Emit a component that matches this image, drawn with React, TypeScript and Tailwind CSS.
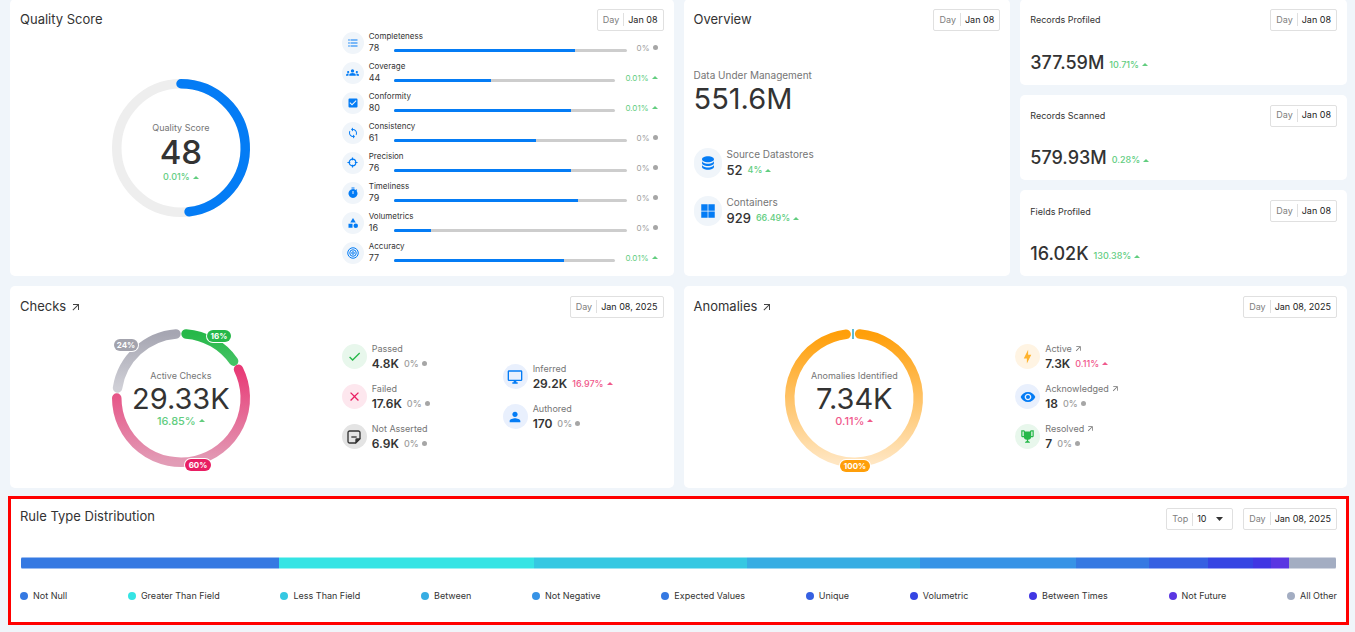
import type { ReactNode } from "react";
import {
  MdArrowOutward,
  MdCategory,
  MdCheck,
  MdCheckBox,
  MdClose,
  MdFormatListBulleted,
  MdGroups,
  MdLoop,
  MdPerson,
  MdVisibility,
} from "react-icons/md";

type Trend = "up" | "bad" | "flat";

function Glyph({ d, size }: { d: string; size: number }) {
  return (
    <svg width={size} height={size} viewBox="0 0 24 24" fill="currentColor" aria-hidden="true">
      <path d={d} />
    </svg>
  );
}

const TIMER =
  "M15 1H9v2h6V1zm4.03 6.39 1.42-1.42c-.43-.51-.9-.99-1.41-1.41l-1.42 1.42A8.96 8.96 0 0 0 12 4a9 9 0 1 0 7.03 3.39zM13 14h-2V8h2v6z";
const DATABASE =
  "M12,3C7.58,3 4,4.79 4,7C4,9.21 7.58,11 12,11C16.42,11 20,9.21 20,7C20,4.79 16.42,3 12,3M4,9V12C4,14.21 7.58,16 12,16C16.42,16 20,14.21 20,12V9C20,11.21 16.42,13 12,13C7.58,13 4,11.21 4,9M4,14V17C4,19.21 7.58,21 12,21C16.42,21 20,19.21 20,17V14C20,16.21 16.42,18 12,18C7.58,18 4,16.21 4,14Z";
const GRID = "M3 3h8.5v8.5H3zM12.5 3H21v8.5h-8.5zM3 12.5h8.5V21H3zM12.5 12.5H21V21h-8.5z";
const MONITOR =
  "M21,16H3V4H21M21,2H3C1.89,2 1,2.89 1,4V16A2,2 0 0,0 3,18H10V20H8V22H16V20H14V18H21A2,2 0 0,0 23,16V4C23,2.89 22.1,2 21,2Z";
const BOLT = "M11 15H6L13 1V9H18L11 23V15Z";
const TROPHY =
  "M18 2C17.1 2 16 3 16 4H8C8 3 6.9 2 6 2H2V11C2 12 3 13 4 13H6.2C6.6 15 7.9 16.7 11 17V19.08C8 19.54 8 22 8 22H16C16 22 16 19.54 13 19.08V17C16.1 16.7 17.4 15 17.8 13H20C21 13 22 12 22 11V2H18M6 11H4V4H6V11M20 11H18V4H20V11Z";

function TargetIcon() {
  return (
    <svg width="12" height="12" viewBox="0 0 24 24" fill="none" stroke="currentColor" strokeWidth="2" aria-hidden="true">
      <circle cx="12" cy="12" r="10.5" />
      <circle cx="12" cy="12" r="6.5" />
      <circle cx="12" cy="12" r="2.5" />
    </svg>
  );
}

function CrosshairIcon() {
  return (
    <svg width="11" height="11" viewBox="0 0 24 24" fill="none" stroke="currentColor" strokeWidth="2.6" aria-hidden="true">
      <circle cx="12" cy="12" r="7.2" />
      <path d="M12 1v6M12 17v6M1 12h6M17 12h6" />
    </svg>
  );
}

function NoteIcon() {
  return (
    <svg width="16" height="16" viewBox="0 0 24 24" aria-hidden="true">
      <path
        d="M14.5 21H5.5A2.5 2.5 0 0 1 3 18.5V5.5A2.5 2.5 0 0 1 5.5 3h13A2.5 2.5 0 0 1 21 5.5v9z"
        fill="none"
        stroke="currentColor"
        strokeWidth="2"
      />
      <path d="M14 21.5V16a2 2 0 0 1 2-2h5.5v1L15 21.5z" fill="currentColor" />
      <path d="M8 11h8v2H8z" fill="currentColor" />
    </svg>
  );
}

function Marker({ trend }: { trend: Trend }) {
  return trend === "flat" ? (
    <span className="size-[5px] rounded-full bg-[#a6a6a6]" />
  ) : (
    <svg width="6" height="3" viewBox="0 0 6 3" fill="currentColor" aria-hidden="true">
      <path d="M0 3L3 0L6 3z" />
    </svg>
  );
}

const deltaSizes = {
  sm: "text-[8px] font-normal",
  md: "text-[9px] font-medium",
  lg: "text-[11px] font-medium",
};

function Delta({ value, trend = "up", size = "md" }: { value: string; trend?: Trend; size?: keyof typeof deltaSizes }) {
  const color = trend === "up" ? "text-[#62cd7f]" : trend === "bad" ? "text-[#f0598c]" : "text-[#9e9e9e]";
  return (
    <span className={`flex items-center gap-[3px] leading-[14px] ${color} ${deltaSizes[size]}`}>
      {value}
      <Marker trend={trend} />
    </span>
  );
}

function DateChip({ date }: { date: string }) {
  return (
    <button
      type="button"
      className="flex h-[22px] items-center rounded-[2px] border border-[#e0e0e0] px-[5px] pb-px text-[9px] whitespace-nowrap"
    >
      <span className="text-[#808080]">Day</span>
      <span className="mx-1 h-[13px] w-px bg-[#e0e0e0]" />
      <span className="text-[#222]">{date}</span>
    </button>
  );
}

function Card({ title, date, link = false, children }: { title: string; date: string; link?: boolean; children: ReactNode }) {
  return (
    <>
      <header className="flex h-[22px] items-center justify-between">
        <h2 className="flex items-center gap-1 text-[13px]">
          {title}
          {link && (
            <a href="#details" aria-label={`Open ${title}`} className="text-[#444]">
              <MdArrowOutward size={12} />
            </a>
          )}
        </h2>
        <DateChip date={date} />
      </header>
      {children}
    </>
  );
}

const metrics: { name: string; value: number; delta?: string; icon: ReactNode }[] = [
  { name: "Completeness", value: 78, icon: <MdFormatListBulleted size={12} /> },
  { name: "Coverage", value: 44, delta: "0.01%", icon: <MdGroups size={13} /> },
  { name: "Conformity", value: 80, delta: "0.01%", icon: <MdCheckBox size={12} /> },
  { name: "Consistency", value: 61, icon: <MdLoop size={12} /> },
  { name: "Precision", value: 76, icon: <CrosshairIcon /> },
  { name: "Timeliness", value: 79, icon: <Glyph d={TIMER} size={12} /> },
  { name: "Volumetrics", value: 16, icon: <MdCategory size={12} /> },
  { name: "Accuracy", value: 77, delta: "0.01%", icon: <TargetIcon /> },
];

function arc(from: number, to: number) {
  const point = (deg: number) => {
    const a = (deg * Math.PI) / 180;
    return `${70 + 64.25 * Math.sin(a)} ${70 - 64.25 * Math.cos(a)}`;
  };
  return `M${point(from)} A64.25 64.25 0 ${to - from > 180 ? 1 : 0} 1 ${point(to)}`;
}

function Donut({ label, value, delta, trend, large, children }: {
  label: string;
  value: string;
  delta: string;
  trend: Trend;
  large?: boolean;
  children: ReactNode;
}) {
  return (
    <div className="grid place-items-center self-center justify-self-center">
      <svg
        width="140"
        height="140"
        viewBox="0 0 140 140"
        fill="none"
        strokeWidth="9.5"
        strokeLinecap="round"
        className="col-start-1 row-start-1 overflow-visible"
        aria-hidden="true"
      >
        {children}
      </svg>
      <div className={`col-start-1 row-start-1 flex flex-col items-center ${large ? "" : "pt-[10px]"}`}>
        <span className="text-[9px] leading-[14px] text-[#757575]">{label}</span>
        <span className={large ? "text-[29px] leading-[31px]" : "text-[33px] leading-[35px] font-medium"}>
          {value}
        </span>
        <Delta value={delta} trend={trend} size={large ? "lg" : "md"} />
      </div>
    </div>
  );
}

function Badge({ x, y, w, fill, text }: { x: number; y: number; w: number; fill: string; text: string }) {
  return (
    <g>
      <rect x={x - w / 2 - 1} y={y - 7} width={w + 2} height="14" rx="7" fill="#fff" />
      <rect x={x - w / 2} y={y - 6} width={w} height="12" rx="6" fill={fill} />
      <text x={x} y={y + 3} textAnchor="middle" fill="#fff" className="text-[8px] font-bold">
        {text}
      </text>
    </g>
  );
}

function Gradient({ id, from, to }: { id: string; from: string; to: string }) {
  return (
    <linearGradient id={id} x1="0" y1="0" x2="0" y2="1">
      <stop offset="0" stopColor={from} />
      <stop offset="1" stopColor={to} />
    </linearGradient>
  );
}

function Stat({ icon, tint, label, value, delta, trend = "flat", link = false }: {
  icon: ReactNode;
  tint: string;
  label: string;
  value: string;
  delta: string;
  trend?: Trend;
  link?: boolean;
}) {
  return (
    <li className="flex items-center gap-[5px]">
      <span className={`flex size-[25px] items-center justify-center rounded-full ${tint}`}>{icon}</span>
      <div>
        <div className="flex items-center gap-[2px] text-[9px] leading-[14px] text-[#757575]">
          {label}
          {link && (
            <a href="#details" aria-label={`Open ${label}`}>
              <MdArrowOutward size={9} />
            </a>
          )}
        </div>
        <div className="flex items-center gap-[5px] text-[12px] leading-[16px] font-semibold">
          {value}
          <Delta value={delta} trend={trend} />
        </div>
      </div>
    </li>
  );
}

const totals = [
  { title: "Records Profiled", value: "377.59M", delta: "10.71%" },
  { title: "Records Scanned", value: "579.93M", delta: "0.28%" },
  { title: "Fields Profiled", value: "16.02K", delta: "130.38%" },
];

const sources = [
  { name: "Source Datastores", value: "52", delta: "4%", d: DATABASE },
  { name: "Containers", value: "929", delta: "66.49%", d: GRID },
];

const rules = [
  { name: "Not Null", share: 258, color: "#3579e2" },
  { name: "Greater Than Field", share: 255, color: "#35e4e4" },
  { name: "Less Than Field", share: 213, color: "#35c8e2" },
  { name: "Between", share: 173, color: "#37ade3" },
  { name: "Not Negative", share: 156, color: "#3793e6" },
  { name: "Expected Values", share: 73, color: "#3579e2" },
  { name: "Unique", share: 59, color: "#3560e2" },
  { name: "Volumetric", share: 45, color: "#3545e3" },
  { name: "Between Times", share: 18, color: "#4036e3" },
  { name: "Not Future", share: 18, color: "#5a36e2" },
  { name: "All Other", share: 47, color: "#a3adc2" },
];

export default function App() {
  return (
    <main className="min-h-screen overflow-hidden bg-[#f0f5fa] pr-2 pl-[10px] font-[Inter,sans-serif] text-[#333]">
      <div className="-mt-px grid grid-cols-4 gap-[10px]">
        <section className="col-span-2 flex min-h-[277px] flex-col rounded-[5px] bg-white p-[10px]">
          <Card title="Quality Score" date="Jan 08">
            <div className="grid flex-1 grid-cols-2 pb-[2px]">
              <Donut label="Quality Score" value="48" delta="0.01%" trend="up">
                <circle cx="70" cy="70" r="64.25" stroke="#eee" />
                <path d={arc(0, 172.8)} stroke="#047cf5" />
              </Donut>
              <ul className="flex flex-col justify-center gap-2">
                {metrics.map((m) => (
                  <li key={m.name} className="flex h-[22px] gap-[5px] pr-[6px]">
                    <span className="flex size-[22px] items-center justify-center rounded-full bg-[#f0f5fa] text-[#047cf5]">
                      {m.icon}
                    </span>
                    <div className="flex-1">
                      <div className="text-[8px] leading-[9px]">{m.name}</div>
                      <div className="flex items-center text-[9px] leading-[13px]">
                        <span className="w-[25px]">{m.value}</span>
                        <div className="mt-[6px] mr-[10px] h-[3px] flex-1 overflow-hidden rounded-full bg-[#cdcdcd]">
                          <div className="h-full bg-[#047cf5]" style={{ width: `${m.value}%` }} />
                        </div>
                        <Delta value={m.delta ?? "0%"} trend={m.delta ? "up" : "flat"} size="sm" />
                      </div>
                    </div>
                  </li>
                ))}
              </ul>
            </div>
          </Card>
        </section>

        <section className="flex flex-col rounded-[5px] bg-white p-[10px]">
          <Card title="Overview" date="Jan 08">
            <div className="pt-[37px]">
              <div className="text-[10px] leading-[14px] text-[#757575]">Data Under Management</div>
              <div className="text-[29px] leading-[34px]">551.6M</div>
              <ul className="flex flex-col gap-4 pt-[31px]">
                {sources.map((s) => (
                  <li key={s.name} className="flex items-center gap-[5px]">
                    <span className="flex h-[30px] w-7 items-center justify-center rounded-full bg-[#f0f5fa] text-[#047cf5]">
                      <Glyph d={s.d} size={18} />
                    </span>
                    <div>
                      <div className="text-[10px] leading-[14px] text-[#757575]">{s.name}</div>
                      <div className="flex items-center gap-[5px] text-[13px] leading-[18px] font-medium">
                        {s.value}
                        <Delta value={s.delta} />
                      </div>
                    </div>
                  </li>
                ))}
              </ul>
            </div>
          </Card>
        </section>

        <div className="flex flex-col gap-[10px]">
          {totals.map((t) => (
            <section key={t.title} className="flex flex-1 flex-col justify-between rounded-[5px] bg-white p-[10px]">
              <header className="flex items-center justify-between">
                <h2 className="text-[9px]">{t.title}</h2>
                <DateChip date="Jan 08" />
              </header>
              <div className="flex items-center gap-[5px] text-[18px] leading-6 font-medium">
                {t.value}
                <div className="pt-1">
                  <Delta value={t.delta} />
                </div>
              </div>
            </section>
          ))}
        </div>

        <section className="col-span-2 flex min-h-[202px] flex-col rounded-[5px] bg-white p-[10px]">
          <Card title="Checks" date="Jan 08, 2025" link>
            <div className="grid flex-1 grid-cols-2">
              <Donut label="Active Checks" value="29.33K" delta="16.85%" trend="up" large>
                <Gradient id="passed" from="#26b849" to="#43c263" />
                <Gradient id="failed" from="#e83a76" to="#e29cb6" />
                <Gradient id="idle" from="#a6a6b2" to="#cfcfd6" />
                <path d={arc(4.5, 55)} stroke="url(#passed)" />
                <path d={arc(63.5, 270)} stroke="url(#failed)" />
                <path d={arc(279, 355.5)} stroke="url(#idle)" />
                <Badge x={108} y={8} w={24} fill="#26b849" text="16%" />
                <Badge x={15} y={17} w={24} fill="#a3a3ad" text="24%" />
                <Badge x={87} y={137} w={26} fill="#e91e63" text="60%" />
              </Donut>
              <div className="grid grid-cols-2 items-center pb-[3px]">
                <ul className="flex flex-col gap-[10px]">
                  <Stat icon={<MdCheck size={15} />} tint="bg-[#e8f7ec] text-[#26b849]" label="Passed" value="4.8K" delta="0%" />
                  <Stat icon={<MdClose size={15} />} tint="bg-[#fde7ee] text-[#e91e63]" label="Failed" value="17.6K" delta="0%" />
                  <Stat icon={<NoteIcon />} tint="bg-[#e4e4e4] text-[#333]" label="Not Asserted" value="6.9K" delta="0%" />
                </ul>
                <ul className="flex flex-col gap-[10px]">
                  <Stat
                    icon={<Glyph d={MONITOR} size={16} />}
                    tint="bg-[#e9f0fd] text-[#047cf5]"
                    label="Inferred"
                    value="29.2K"
                    delta="16.97%"
                    trend="bad"
                  />
                  <Stat icon={<MdPerson size={16} />} tint="bg-[#e9f0fd] text-[#047cf5]" label="Authored" value="170" delta="0%" />
                </ul>
              </div>
            </div>
          </Card>
        </section>

        <section className="col-span-2 flex flex-col rounded-[5px] bg-white p-[10px]">
          <Card title="Anomalies" date="Jan 08, 2025" link>
            <div className="grid flex-1 grid-cols-2">
              <Donut label="Anomalies Identified" value="7.34K" delta="0.11%" trend="bad" large>
                <Gradient id="anomalies" from="#ff9f0a" to="#ffe6c2" />
                <path d={arc(5, 353)} stroke="url(#anomalies)" />
                <path d="M69 1v10" stroke="#5fbcd3" strokeWidth="2" strokeLinecap="butt" />
                <Badge x={71} y={138} w={30} fill="#ff9f0a" text="100%" />
              </Donut>
              <ul className="flex flex-col justify-center gap-[10px] pb-[3px]">
                <Stat icon={<Glyph d={BOLT} size={15} />} tint="bg-[#fff4e3] text-[#ffb32e]" label="Active" value="7.3K" delta="0.11%" trend="bad" link />
                <Stat icon={<MdVisibility size={16} />} tint="bg-[#e9f0fd] text-[#047cf5]" label="Acknowledged" value="18" delta="0%" link />
                <Stat icon={<Glyph d={TROPHY} size={15} />} tint="bg-[#e8f7ec] text-[#26b849]" label="Resolved" value="7" delta="0%" link />
              </ul>
            </div>
          </Card>
        </section>

        <section className="col-span-4 bg-white p-[10px] pb-5 outline-[3px] -outline-offset-1 outline-[#ff0000]">
          <header className="flex h-[22px] items-center gap-[10px]">
            <h2 className="flex-1 pb-1 text-[13px]">Rule Type Distribution</h2>
            <div className="flex h-[22px] items-center rounded-[2px] border border-[#e0e0e0] px-[5px] text-[9px]">
              <label htmlFor="top" className="text-[#808080]">
                Top
              </label>
              <span className="mx-1 h-[13px] w-px bg-[#e0e0e0]" />
              <select id="top" defaultValue="10" className="w-[19px] appearance-none bg-transparent text-[#222] outline-none">
                <option>10</option>
                <option>20</option>
              </select>
              <svg width="7" height="4" viewBox="0 0 7 4" className="mr-1 fill-[#333]" aria-hidden="true">
                <path d="M0 0h7L3.5 4z" />
              </svg>
            </div>
            <DateChip date="Jan 08, 2025" />
          </header>
          <div className="mx-px mt-[27px] flex h-3 overflow-hidden rounded-[2px]">
            {rules.map((r) => (
              <div key={r.name} className="border-y border-white/50" style={{ flexGrow: r.share, backgroundColor: r.color }} />
            ))}
          </div>
          <ul className="flex justify-between pt-5 text-[9px] leading-[14px]">
            {rules.map((r) => (
              <li key={r.name} className="flex items-center gap-[5px]">
                <span className="size-2 rounded-full" style={{ backgroundColor: r.color }} />
                {r.name}
              </li>
            ))}
          </ul>
        </section>
      </div>
    </main>
  );
}
